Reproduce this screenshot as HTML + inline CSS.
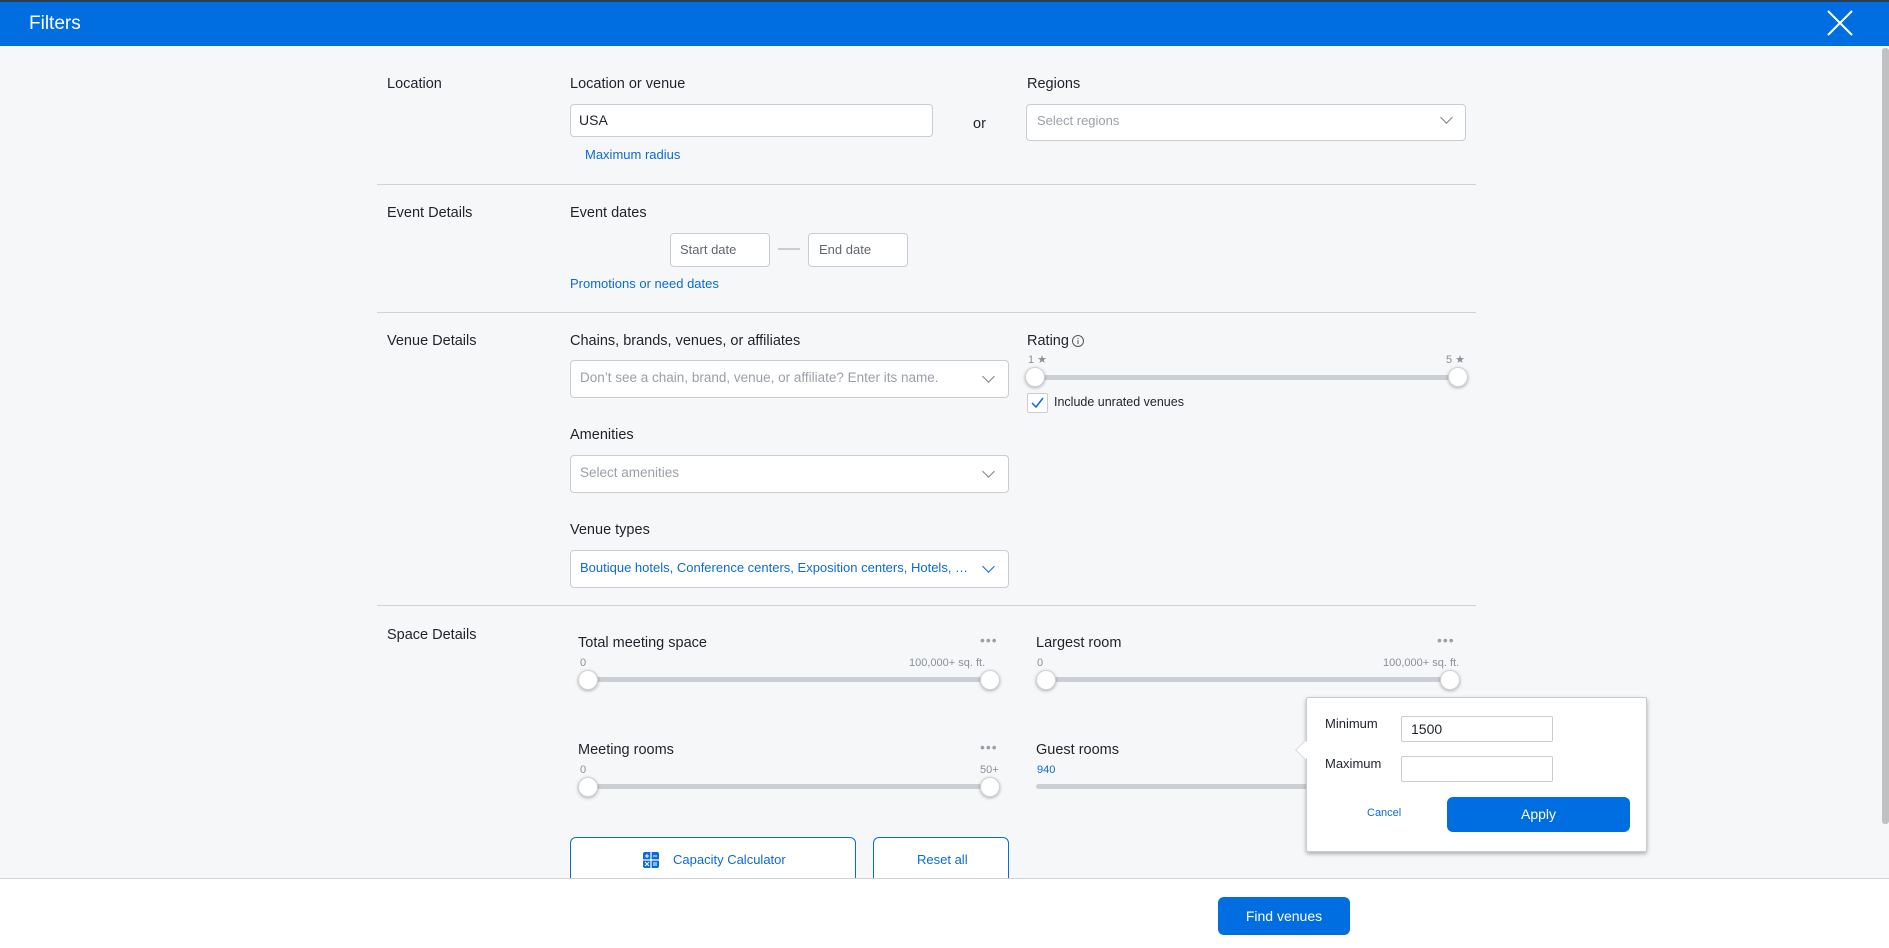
<!DOCTYPE html>
<html><head><meta charset="utf-8"><style>
*{box-sizing:border-box;margin:0;padding:0}
body{width:1889px;height:948px;overflow:hidden;background:#f6f7f9;font-family:"Liberation Sans",Arial,sans-serif;color:#1f2329;position:relative}
.a{position:absolute;white-space:nowrap}
.hdr{left:0;top:0;width:1889px;height:46px;background:#006ee0;border-top:2px solid #2d3e50}
.lbl{font-size:14.5px;line-height:18px}
.box{position:absolute;background:#fff;border:1px solid #c9ccd1;border-radius:4px}
.ph{color:#9aa0a8;font-size:13.5px}
.link{color:#0a6ad8;font-size:13px}
.div{position:absolute;left:377px;width:1099px;height:1px;background:#cfd2d6}
.trk{position:absolute;height:5px;background:#cbced2;border-radius:3px}
.th{position:absolute;width:20px;height:20px;border-radius:50%;background:#fff;border:1px solid #d0d3d7;box-shadow:0 1px 3px rgba(0,0,0,.3)}
.sm{font-size:11px;color:#8a9097}
.dots{font-size:14px;color:#9aa0a8;letter-spacing:1px}
.chev{position:absolute;width:9px;height:9px;border-right:1.5px solid #7b828a;border-bottom:1.5px solid #7b828a;transform:rotate(45deg)}
</style></head><body>
<div class="a hdr"></div>
<div class="a" style="left:29px;top:13px;color:#fff;font-size:19px">Filters</div>
<svg class="a" style="left:1827px;top:10px" width="26" height="26"><path d="M1 1L25 25M25 1L1 25" stroke="#fff" stroke-width="2"/></svg>
<div class="a" style="left:1882px;top:48px;width:7px;height:776px;background:#c1c1c1;border-radius:3px"></div>

<div class="a lbl" style="left:387px;top:75px">Location</div>
<div class="a lbl" style="left:570px;top:75px">Location or venue</div>
<div class="box" style="left:570px;top:104px;width:363px;height:33px"></div>
<div class="a" style="left:579px;top:112px;font-size:14px">USA</div>
<div class="a lbl" style="left:973px;top:115px">or</div>
<div class="a lbl" style="left:1027px;top:75px">Regions</div>
<div class="box" style="left:1026px;top:104px;width:440px;height:37px"></div>
<div class="a ph" style="left:1037px;top:113px;font-size:13px">Select regions</div>
<div class="chev" style="left:1442px;top:113px"></div>
<div class="a link" style="left:585px;top:147px">Maximum radius</div>
<div class="div" style="top:184px"></div>

<div class="a lbl" style="left:387px;top:204px">Event Details</div>
<div class="a lbl" style="left:570px;top:204px">Event dates</div>
<div class="box" style="left:670px;top:233px;width:100px;height:34px"></div>
<div class="a ph" style="left:680px;top:242px;font-size:13px;color:#606770">Start date</div>
<div class="a" style="left:778px;top:248px;width:22px;height:2px;background:#c9ccd1"></div>
<div class="box" style="left:808px;top:233px;width:100px;height:34px"></div>
<div class="a ph" style="left:819px;top:242px;font-size:13px;color:#606770">End date</div>
<div class="a link" style="left:570px;top:276px">Promotions or need dates</div>
<div class="div" style="top:312px"></div>

<div class="a lbl" style="left:387px;top:332px">Venue Details</div>
<div class="a lbl" style="left:570px;top:332px">Chains, brands, venues, or affiliates</div>
<div class="box" style="left:570px;top:360px;width:439px;height:38px"></div>
<div class="a ph" style="left:580px;top:370px">Don’t see a chain, brand, venue, or affiliate? Enter its name.</div>
<div class="chev" style="left:984px;top:372px"></div>
<div class="a lbl" style="left:570px;top:426px">Amenities</div>
<div class="box" style="left:570px;top:455px;width:439px;height:38px"></div>
<div class="a ph" style="left:580px;top:465px">Select amenities</div>
<div class="chev" style="left:984px;top:467px"></div>
<div class="a lbl" style="left:570px;top:521px">Venue types</div>
<div class="box" style="left:570px;top:550px;width:439px;height:38px"></div>
<div class="a" style="left:580px;top:560px;width:395px;overflow:hidden;text-overflow:ellipsis;font-size:13px;color:#0a6ad8">Boutique hotels, Conference centers, Exposition centers, Hotels, Luxury hotels</div>
<div class="chev" style="left:984px;top:562px;border-color:#0a6ad8"></div>

<div class="a lbl" style="left:1027px;top:332px">Rating</div>
<svg class="a" style="left:1071px;top:334px" width="14" height="14"><circle cx="7" cy="7" r="5.5" fill="none" stroke="#555" stroke-width="1"/><path d="M7 6v4M7 4v1" stroke="#555"/></svg>
<div class="a sm" style="left:1028px;top:353px">1 ★</div>
<div class="a sm" style="left:1446px;top:353px">5 ★</div>
<div class="trk" style="left:1036px;top:375px;width:422px"></div>
<div class="th" style="left:1025px;top:367px"></div>
<div class="th" style="left:1448px;top:367px"></div>
<div class="box" style="left:1027px;top:393px;width:21px;height:20px;border-radius:2px"></div>
<svg class="a" style="left:1031px;top:397px" width="13" height="12"><path d="M1 6l4 4 7-9" stroke="#0a6ad8" stroke-width="1.5" fill="none"/></svg>
<div class="a" style="left:1054px;top:395px;font-size:12.5px">Include unrated venues</div>
<div class="div" style="top:605px"></div>

<div class="a lbl" style="left:387px;top:626px">Space Details</div>
<div class="a lbl" style="left:578px;top:634px">Total meeting space</div>
<div class="a dots" style="left:980px;top:632px">•••</div>
<div class="a sm" style="left:580px;top:657px">0</div>
<div class="a sm" style="left:909px;top:657px">100,000+ sq. ft.</div>
<div class="trk" style="left:588px;top:677px;width:402px"></div>
<div class="th" style="left:578px;top:670px"></div>
<div class="th" style="left:980px;top:670px"></div>

<div class="a lbl" style="left:1036px;top:634px">Largest room</div>
<div class="a dots" style="left:1437px;top:632px">•••</div>
<div class="a sm" style="left:1037px;top:657px">0</div>
<div class="a sm" style="left:1383px;top:657px">100,000+ sq. ft.</div>
<div class="trk" style="left:1044px;top:677px;width:406px"></div>
<div class="th" style="left:1036px;top:670px"></div>
<div class="th" style="left:1440px;top:670px"></div>

<div class="a lbl" style="left:578px;top:741px">Meeting rooms</div>
<div class="a dots" style="left:980px;top:739px">•••</div>
<div class="a sm" style="left:580px;top:764px">0</div>
<div class="a sm" style="left:980px;top:764px">50+</div>
<div class="trk" style="left:588px;top:784px;width:402px"></div>
<div class="th" style="left:578px;top:777px"></div>
<div class="th" style="left:980px;top:777px"></div>

<div class="a lbl" style="left:1036px;top:741px">Guest rooms</div>
<div class="a sm" style="left:1037px;top:764px;color:#0a6ad8">940</div>
<div class="trk" style="left:1036px;top:784px;width:280px"></div>

<div class="a" style="left:570px;top:837px;width:286px;height:50px;border:1px solid #0a6ad8;border-radius:6px;background:#fff"></div>
<svg class="a" style="left:643px;top:852px" width="16" height="16"><rect width="16" height="16" rx="2" fill="#0a6ad8"/><path d="M8 0v16M0 8h16" stroke="#fff" stroke-width="1.2"/><path d="M2 4h4M4 2v4M10 4h4M2 10l4 4M6 10l-4 4M10 11h4M10 13h4" stroke="#fff" stroke-width="1"/></svg>
<div class="a" style="left:673px;top:852px;font-size:13px;color:#0a6ad8">Capacity Calculator</div>
<div class="a" style="left:873px;top:837px;width:136px;height:50px;border:1px solid #0a6ad8;border-radius:6px;background:#fff"></div>
<div class="a" style="left:917px;top:852px;font-size:13px;color:#0a6ad8">Reset all</div>

<div class="a" style="left:0;top:878px;width:1889px;height:70px;background:#fff;border-top:1px solid #cfd2d6"></div>
<div class="a" style="left:1218px;top:897px;width:132px;height:38px;background:#006ee0;border-radius:6px;color:#fff;font-size:14px;text-align:center;line-height:38px">Find venues</div>

<div class="a" style="left:1306px;top:697px;width:341px;height:155px;background:#fff;border:1px solid #c9ccd1;border-radius:2px;box-shadow:0 2px 4px rgba(0,0,0,.3)"></div>
<div class="a" style="left:1298px;top:743px;width:14px;height:14px;background:#fff;border-left:1px solid #d5d8dc;border-bottom:1px solid #d5d8dc;transform:rotate(45deg)"></div>
<div class="a" style="left:1325px;top:716px;font-size:13px">Minimum</div>
<div class="box" style="left:1401px;top:716px;width:152px;height:26px;border-radius:2px"></div>
<div class="a" style="left:1411px;top:721px;font-size:14px">1500</div>
<div class="a" style="left:1325px;top:756px;font-size:13px">Maximum</div>
<div class="box" style="left:1401px;top:756px;width:152px;height:26px;border-radius:2px"></div>
<div class="a" style="left:1367px;top:807px;font-size:11px;color:#0a6ad8">Cancel</div>
<div class="a" style="left:1447px;top:797px;width:183px;height:35px;background:#006ee0;border-radius:6px;color:#fff;font-size:14px;text-align:center;line-height:35px">Apply</div>
</body></html>
